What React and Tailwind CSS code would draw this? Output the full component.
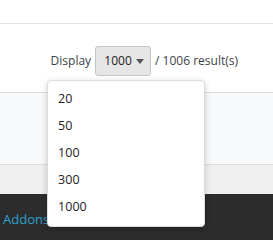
export default function App() {
  const options = ["20", "50", "100", "300", "1000"];
  return (
    <div
      className="relative h-[241px] w-[273px] overflow-hidden bg-white text-[12px] text-[#3c434a]"
      style={{ fontFamily: '"Open Sans", "Noto Sans", sans-serif' }}
    >
      <div className="h-[24px] border-b border-[#e5e5e5] bg-white" />
      <div className="flex h-[68px] items-start justify-end pr-[35px] pt-[22px]">
        <div className="flex items-center">
          <span className="mr-[4px]">Display</span>
          <div className="relative">
            <button className="flex h-[30px] w-[56px] items-center justify-center gap-[4px] rounded-[3px] border border-[#c5c5c5] bg-[#e6e6e6] pl-[2px] text-[#222]">
              <span>1000</span>
              <svg width="8" height="5" viewBox="0 0 8 5">
                <path d="M0 0h8L4 5z" fill="#555" />
              </svg>
            </button>
            <div className="absolute left-[-48px] top-[34px] z-10 w-[158px] rounded-[4px] border border-[#ddd] bg-white py-[5px] shadow-[0_2px_6px_rgba(0,0,0,0.2)]">
              {options.map((o) => (
                <div key={o} className="flex h-[27px] items-center pl-[10px] text-[12.5px] text-[#222]">
                  {o}
                </div>
              ))}
            </div>
          </div>
          <span className="ml-[4px]">/ 1006 result(s)</span>
        </div>
      </div>
      <div className="h-[73px] border-y border-[#dcdcde] bg-[#f8f9fb]" />
      <div className="h-[29px] bg-[#f0f0f1]" />
      <div className="flex h-[46px] items-start gap-[10px] bg-[#2c2c2c] px-[3px] pt-[16px] text-[13px] text-[#2ea2cc]">
        <span>Addons</span>
        <span className="mt-[5px] h-[10px] w-[10px] rounded-[2px] bg-[#aaa]" />
        <span>Settings</span>
      </div>
    </div>
  );
}
